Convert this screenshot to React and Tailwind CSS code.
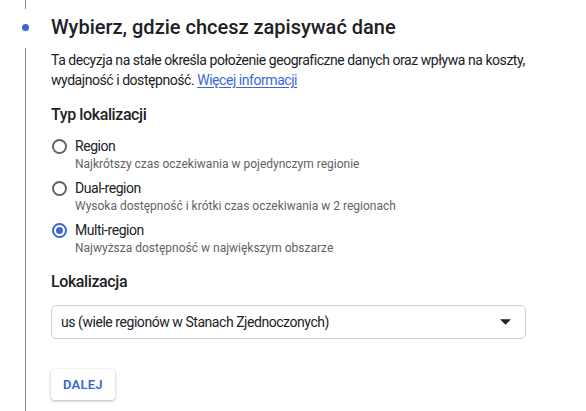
import React from 'react';

const opcje = [
    { nazwa: 'Region', opis: 'Najkrótszy czas oczekiwania w pojedynczym regionie', wybrana: false },
    { nazwa: 'Dual-region', opis: 'Wysoka dostępność i krótki czas oczekiwania w 2 regionach', wybrana: false },
    { nazwa: 'Multi-region', opis: 'Najwyższa dostępność w największym obszarze', wybrana: true },
];

const Radio = ({ checked }) => (
    checked ? (
        <div className="w-[15px] h-[15px] rounded-full border-2 border-[#3b67d6] flex items-center justify-center">
            <div className="w-[7px] h-[7px] rounded-full bg-[#3b67d6]" />
        </div>
    ) : (
        <div className="w-[15px] h-[15px] rounded-full border-2 border-[#5f6368]" />
    )
);

export default function App() {
    return (
        <div className="w-[586px] h-[411px] bg-white flex text-[#202124] overflow-hidden" style={{ fontFamily: 'Roboto, "Noto Sans", sans-serif' }}>
            {/* Pasek kroku */}
            <div className="w-[51px] flex flex-col shrink-0">
                <div className="ml-[25px] w-px h-[9px] bg-[#80868b]" />
                <div className="ml-[22px] mt-[15px] w-[7px] h-[7px] rounded-full bg-[#3b67d6]" />
                <div className="ml-[25px] mt-[17px] w-px flex-1 bg-[#80868b]" />
            </div>

            <div className="flex flex-col pt-[13px] w-[475px]">
                <h1 className="text-[20px] leading-[28px] font-medium">Wybierz, gdzie chcesz zapisywać dane</h1>
                <p className="mt-[9px] w-[482px] text-[14px] leading-[20px] tracking-[-0.45px]">
                    Ta decyzja na stałe określa położenie geograficzne danych oraz wpływa na koszty, wydajność i dostępność.{' '}
                    <a className="text-[#3b67d6] underline underline-offset-2">Więcej informacji</a>
                </p>

                <h2 className="mt-[13px] text-[16px] leading-[24px] font-medium tracking-[-0.4px]">Typ lokalizacji</h2>
                <div className="mt-[9px] flex flex-col gap-[6px]">
                    {opcje.map((o) => (
                        <div key={o.nazwa} className="flex">
                            <div className="h-[20px] flex items-center pl-px w-[24px]">
                                <Radio checked={o.wybrana} />
                            </div>
                            <div className="flex flex-col">
                                <span className="text-[14px] leading-[20px] tracking-[-0.45px]">{o.nazwa}</span>
                                <span className="text-[12px] leading-[16px] text-[#5f6368]">{o.opis}</span>
                            </div>
                        </div>
                    ))}
                </div>

                <h2 className="mt-[14px] text-[16px] leading-[24px] font-medium tracking-[-0.4px]">Lokalizacja</h2>
                <div className="mt-[11px] h-[34px] border border-[#cfcfcf] rounded-[5px] flex items-center justify-between pl-[9px] pr-[14px]">
                    <span className="text-[14px] tracking-[-0.45px]">us (wiele regionów w Stanach Zjednoczonych)</span>
                    <svg width="11" height="6" viewBox="0 0 10 5">
                        <path d="M0 0 L10 0 L5 5 Z" fill="#202124" />
                    </svg>
                </div>

                <div className="mt-[30px]">
                    <button className="h-[31px] px-[12px] rounded-[4px] bg-white shadow-[0_1px_3px_rgba(0,0,0,0.3)] text-[13px] font-semibold text-[#3b67d6] tracking-[0.2px]">
                        DALEJ
                    </button>
                </div>
            </div>
        </div>
    );
}
